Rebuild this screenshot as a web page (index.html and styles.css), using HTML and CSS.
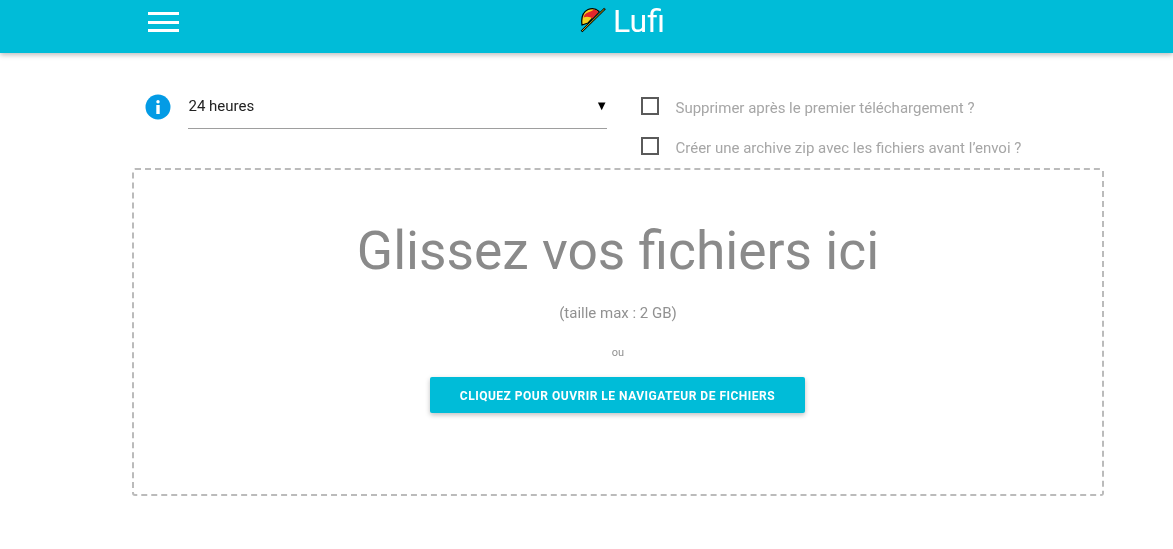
FILE: index.html
```html
<!DOCTYPE html>
<html lang="fr">

<head>
  <meta charset="UTF-8">
  <meta name="viewport" content="width=device-width, initial-scale=1.0">
  <title>Lufi</title>
  <link rel="stylesheet" href="styles.css">
</head>

<body>
  <nav class="nav">
    <a class="menu" href="#" aria-label="menu">
      <span></span>
      <span></span>
      <span></span>
    </a>
    <a class="brand" href="#">
      <svg class="hat" width="26" height="26" viewBox="0 0 26 26">
        <path d="M2 18C1 11 3 5 8 2.500 12 .8 16 1.500 19 4.500L8 16Z" fill="#f5d320" stroke="#000" stroke-width="1.200"/>
        <path d="M3.500 10.500C7 9 10.500 10 12.500 11.500L18.500 5C17 3.500 15.500 2.800 14 2.500 11 5 7 5 4.800 7.500 4.200 8.500 3.800 9.500 3.500 10.500Z" fill="#e3262b"/>
        <path d="M1.500 24.500L25 1.500" stroke="#000" stroke-width="2.400"/>
        <path d="M2 24L24.500 2" stroke="#f5d320" stroke-width=".8"/>
      </svg>
      <span>Lufi</span>
    </a>
  </nav>

  <main class="content">
    <div class="options">
      <div class="delay">
        <svg class="info" width="26" height="26" viewBox="0 0 26 26">
          <circle cx="13" cy="13" r="12.500" fill="#039be5"/>
          <rect x="11.300" y="6" width="3.400" height="3.400" rx="1.700" fill="#fff"/>
          <rect x="11.300" y="11" width="3.400" height="9" fill="#fff"/>
        </svg>
        <div class="select">
          <span>24 heures</span>
          <span class="caret">▼</span>
        </div>
      </div>
      <div class="checks">
        <label class="check"><span class="box"></span><span class="lbl">Supprimer après le premier téléchargement ?</span></label>
        <label class="check"><span class="box"></span><span class="lbl">Créer une archive zip avec les fichiers avant l’envoi ?</span></label>
      </div>
    </div>

    <div class="drop">
      <h1>Glissez vos fichiers ici</h1>
      <p class="max">(taille max : 2 GB)</p>
      <p class="or">ou</p>
      <button class="btn">Cliquez pour ouvrir le navigateur de fichiers</button>
    </div>
  </main>
</body>

</html>
```

FILE: styles.css
```css
* {
  box-sizing: border-box;
}

body {
  margin: 0;
  font-family: Roboto, sans-serif;
  color: #000;
  background: #fff;
}

.nav {
  height: 53px;
  background: #00bcd8;
  box-shadow: 0 2px 5px rgba(0, 0, 0, .26);
  display: flex;
  position: relative;
}

.menu {
  width: 31px;
  margin: 12px 0 0 148px;
  display: flex;
  flex-direction: column;
  gap: 5.500px;
}

.menu span {
  height: 3px;
  background: #fff;
}

.brand {
  display: flex;
  gap: 7px;
  height: 40px;
  margin-left: 401px;
  color: #fff;
  text-decoration: none;
  font-size: 32px;
  font-weight: 400;
  line-height: 42px;
  will-change: opacity;
}

.hat {
  margin-top: 7px;
}

.content {
  width: 972px;
  margin-left: 132px;
  will-change: opacity;
}

.options {
  display: flex;
  height: 115px;
  padding-top: 40px;
}

.delay {
  display: flex;
  width: 475px;
  margin-left: 13px;
}

.info {
  margin-top: 1px;
}

.select {
  width: 419px;
  height: 36px;
  margin-left: 17px;
  border-bottom: 1px solid #9e9e9e;
  display: flex;
  justify-content: space-between;
  padding: 4px 0 0 .5px;
  font-size: 15px;
  color: #222;
}

.caret {
  font-size: 13px;
  color: #000;
  line-height: 18px;
  margin-right: -1px;
}

.checks {
  margin-left: 21px;
  margin-top: 2px;
  display: flex;
  flex-direction: column;
  gap: 18px;
}

.check {
  display: flex;
  align-items: center;
  height: 22px;
  font-size: 15px;
  color: #a6a6a6;
}

.lbl {
  padding: 4px 0 0 .5px;
}

.box {
  width: 18px;
  height: 18px;
  border: 2px solid #5a5a5a;
  margin-right: 16px;
}

.drop {
  height: 328px;
  border: 2px dashed #bbb;
  border-radius: 3px;
  display: flex;
  flex-direction: column;
  align-items: center;
}

h1 {
  margin: 46px 0 0;
  font-size: 53.300px;
  font-weight: 400;
  line-height: 70px;
  color: #8a8a8a;
}

.max {
  margin: 17px 0 0;
  font-size: 15px;
  line-height: 20px;
  color: #919191;
}

.or {
  margin: 20px 0 0;
  font-size: 11px;
  line-height: 20px;
  color: #919191;
}

.btn {
  width: 375px;
  height: 36px;
  margin: 14px 2px 0 0;
  padding: 2px 0 0 1px;
  border: 0;
  border-radius: 2px;
  background: #00bcd8;
  box-shadow: 0 2px 5px rgba(0, 0, 0, .25);
  color: #fff;
  font-family: Roboto, sans-serif;
  font-size: 12px;
  font-weight: 700;
  letter-spacing: .5px;
  text-transform: uppercase;
}
```
